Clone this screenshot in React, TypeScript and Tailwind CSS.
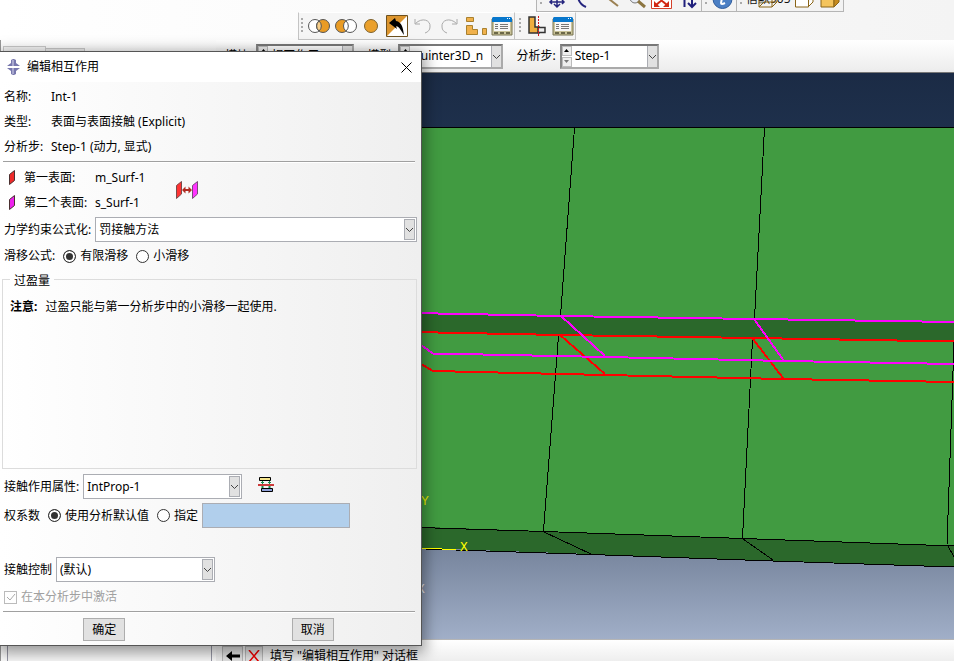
import React from "react";

type ComboProps = {
  id: string;
  label: string;
  value: string;
  width: string;
  labelGap?: string;
};

const Chevron = () => (
  <svg viewBox="0 0 9 21" className="h-[21px] w-[9px]" fill="none" stroke="#444" aria-hidden="true">
    <path d="M1 9 L4.5 12.5 L8 9" />
  </svg>
);

/** Drop-down of the dialog box. */
function Combo({ id, label, value, width, labelGap = "gap-1" }: ComboProps) {
  return (
    <div className={`flex h-[25px] items-center pl-1 ${labelGap}`}>
      <label htmlFor={id} className="shrink-0">{label}</label>
      <div className={`relative h-[25px] border border-[#abadb3] bg-white ${width}`}>
        <select id={id} className="h-full w-full appearance-none bg-transparent pr-4 pl-[3px] outline-none">
          <option>{value}</option>
        </select>
        <span className="pointer-events-none absolute top-px right-px bottom-px flex w-[11px] items-center justify-center border border-[#abadb3] bg-[#e1e1e1]">
          <Chevron />
        </span>
      </div>
    </div>
  );
}

/** Drop-down of the context bar, with its pair of step arrows. */
function SpinCombo({ id, label, value, width }: ComboProps) {
  return (
    <div className="flex items-center gap-1">
      <label htmlFor={id} className="shrink-0">{label}</label>
      <div className={`flex h-[25px] items-stretch border-2 border-[#aaa] border-t-[#777] border-l-[#888] bg-white ${width}`}>
        <div className="flex w-[10px] shrink-0 flex-col gap-px">
          <button type="button" aria-label="上一个" className="flex flex-1 items-center justify-center border border-[#bbb] bg-[#eee]">
            <svg viewBox="0 0 5 3" className="h-[3px] w-[5px]"><path d="M0 3 L2.5 0 L5 3Z" /></svg>
          </button>
          <button type="button" aria-label="下一个" className="flex flex-1 items-center justify-center border border-[#bbb] bg-[#eee]">
            <svg viewBox="0 0 5 3" className="h-[3px] w-[5px]"><path d="M0 0 L2.5 3 L5 0Z" fill="#777" /></svg>
          </button>
        </div>
        <div className="relative min-w-0 flex-1">
          <select id={id} className="h-full w-full appearance-none bg-transparent pr-2 pl-[3px] outline-none">
            <option>{value}</option>
          </select>
          <span className="pointer-events-none absolute top-0 right-0 bottom-0 flex w-[10px] items-center justify-center border-l border-[#abadb3] bg-[#e1e1e1]">
            <Chevron />
          </span>
        </div>
      </div>
    </div>
  );
}

function Radio({ name, label, checked }: { name: string; label: string; checked?: boolean }) {
  return (
    <label className="flex items-center gap-1">
      <input
        type="radio"
        name={name}
        defaultChecked={checked}
        className="size-[13px] appearance-none rounded-full border border-[#333] bg-white checked:bg-[#333] checked:shadow-[inset_0_0_0_2px_white]"
      />
      {label}
    </label>
  );
}

const Rule = () => <hr className="mx-[3px] mr-[6px] h-[2px] border-0 border-t border-[#a0a0a0] bg-white" />;

const Grip = () => (
  <svg viewBox="0 0 3 18" className="h-[18px] w-[3px] shrink-0" fill="#aaa" aria-hidden="true">
    <path d="M0 1h2v2H0zM0 5h2v2H0zM0 9h2v2H0zM0 13h2v2H0z" />
  </svg>
);

const SurfaceIcon = ({ color }: { color: string }) => (
  <svg viewBox="0 0 8 15" className="h-[15px] w-2" aria-hidden="true">
    <path d="M1.5 4.5 L6.5 .5 V10.5 L1.5 14.5Z" fill={color} stroke="#4a3030" />
  </svg>
);

const SwapIcon = () => (
  <svg viewBox="0 0 24 20" className="h-5 w-6" aria-hidden="true">
    <path d="M1.5 5.5 L6.5 1.5 V14 L1.5 18.5Z" fill="#f33" stroke="#7a4a4a" />
    <path d="M17.5 5.5 L22.5 1.5 V14 L17.5 18.5Z" fill="#f3f" stroke="#7a4a7a" />
    <path d="M7 10 L10.5 6.5 V9 H13.5 V6.5 L17 10 L13.5 13.5 V11 H10.5 V13.5Z" fill="#b02a20" />
  </svg>
);

const ManagerIcon = () => (
  <svg viewBox="0 0 22 20" className="h-5 w-[22px]" aria-hidden="true">
    <path d="M1 3h20v16H1z" fill="#c9c39a" stroke="#77724f" />
    <path d="M2 1h18l1 1v4H1V2z" fill="#0877cc" />
    <path d="M16 2h1v1h-1zM18 2h1v1h-1z" fill="#fff" />
    <path d="M3 6h16v9H3z" fill="#f7f7f7" />
    <path d="M4 8.500h3M9 8.500h8M4 10.500h3M9 10.500h8M4 12.500h3M9 12.500h8" stroke="#777" />
    <path d="M3 16h4v2H3zM9 16h4v2H9zM15 16h4v2h-4z" fill="#6c6849" />
  </svg>
);

function Tool({ label, width, children }: { label: string; width: string; children: React.ReactNode }) {
  return (
    <button type="button" aria-label={label} className={`flex h-[26px] shrink-0 items-center justify-center ${width}`}>
      {children}
    </button>
  );
}

/** Upper tool strip; only its lower edge is in view. */
function ViewTools() {
  return (
    <div className="flex h-3 items-end overflow-hidden pl-[536px]">
      <div className="flex h-6 w-[308px] shrink-0 border border-[#b5b5b5] bg-[#f3f3f3]">
        <svg viewBox="536 -12 308 24" className="h-6 w-[308px] shrink-0" fill="none" aria-label="视图工具">
          <path d="M700.500 -12V12M735.500 -12V12" stroke="#b5b5b5" />
          <path d="M539 1h2v2h-2zM704 1h2v2h-2zM739 1h2v2h-2z" fill="#aaa" />
          <path d="M556 -8V6M549 1h14M553 3l3 3 3-3M551 -1l-2 2 2 2M561 -1l2 2-2 2" stroke="#25257e" strokeWidth="1.500" />
          <path d="M577 -4q1 7 8 10" stroke="#25257e" strokeWidth="2" />
          <path d="M608 -2l9 7" stroke="#9b8052" strokeWidth="2" />
          <circle cx="634" cy="-3" r="5" stroke="#777" fill="#e9edf5" />
          <path d="M637 0l7 6" stroke="#8c7540" strokeWidth="3" />
          <path d="M650.500 -11.500h20v19h-20z" fill="#fff" stroke="#d4402a" />
          <path d="M653 6v-6l6 6zM668 6v-6l-6 6z" fill="#d22814" />
          <path d="M655 4l12-10M666 4l-12-10" stroke="#d22814" strokeWidth="2" />
          <path d="M683.500 -8V6M691 -8V6M687 2l4 4 4-4" stroke="#20207c" strokeWidth="2" />
          <circle cx="721.500" cy="-2" r="9.500" fill="#4b7fc4" stroke="#315d9c" />
          <path d="M722 -8l-2 10q0 2 4 0" stroke="#fff" strokeWidth="2" />
          <text x="745" y="2" fontSize="12" fill="#111" fontFamily='"Noto Sans","Noto Sans CJK SC",sans-serif'>信默905</text>
          <path d="M758 -4h13v10h-13zM758 6l5-5h13M771 6l5-5v-9" stroke="#8a6416" />
          <path d="M794.500 -7h13v13h-13zM807 6l5-5v-9" fill="#fff" stroke="#8a6416" />
          <path d="M820 -7h13v13h-13z" fill="#f4c45c" stroke="#8a6416" />
          <path d="M833 6l5-5v-9h-5z" fill="#c58a1e" stroke="#8a6416" />
        </svg>
      </div>
    </div>
  );
}

function SketchTools() {
  return (
    <div className="flex h-7 pl-[298px]">
      <div className="flex w-[217px] shrink-0 items-center border border-[#c4c4c4] border-t-white bg-[#f5f5f5] pl-[2px]">
        <Grip />
        <Tool label="合并" width="w-[29px]">
          <svg viewBox="0 0 22 14" className="h-3.5 w-[22px]" stroke="#555">
            <circle cx="7" cy="7" r="6.500" fill="#fff" />
            <circle cx="15" cy="7" r="6.500" fill="#e99b24" />
            <path d="M11 2a6.500 6.500 0 0 1 0 10a6.500 6.500 0 0 1 0-10" fill="#f8cf89" />
          </svg>
        </Tool>
        <Tool label="减去" width="w-[25px]">
          <svg viewBox="0 0 22 14" className="h-3.5 w-[22px]" stroke="#555">
            <circle cx="7" cy="7" r="6.500" fill="#e99b24" />
            <circle cx="15" cy="7" r="6.500" fill="#fff" />
            <path d="M11 2a6.500 6.500 0 0 1 0 10" fill="none" />
          </svg>
        </Tool>
        <Tool label="替换" width="w-[26px]">
          <svg viewBox="0 0 14 14" className="size-3.5"><circle cx="7" cy="7" r="6.500" fill="#eaa02c" stroke="#7d622f" /></svg>
        </Tool>
        <Tool label="全选" width="w-[26px]">
          <svg viewBox="0 0 22 22" className="size-[22px]">
            <path d="M.5 .5h21v21H.5z" fill="#fff" stroke="#6d5120" />
            <path d="M1 1h20L1 21z" fill="#dc952e" />
            <path d="M3 8l6-5 1 3c6 1 7 7 8 14-3-4-4-8-8-9l1 3z" fill="#000" />
          </svg>
        </Tool>
        <Tool label="撤销" width="w-[26px]">
          <svg viewBox="0 0 18 16" className="h-4 w-[18px]" fill="none" stroke="#aaa">
            <path d="M1 1v5h5M1.500 5.500C8-1 17 2 16 9c0 3-2 5-5 6" />
          </svg>
        </Tool>
        <Tool label="重做" width="w-[26px]">
          <svg viewBox="0 0 18 16" className="h-4 w-[18px]" fill="none" stroke="#aaa">
            <path d="M17 1v5h-5M16.500 5.500C10-1 1 2 2 9c0 3 2 5 5 6" />
          </svg>
        </Tool>
        <Tool label="选择选项" width="w-[27px]">
          <svg viewBox="0 0 22 20" className="h-5 w-[22px]" fill="#f0b14c" stroke="#a9812f">
            <path d="M1.500 1.500h7v4h-7zM1.500 9.500h6v4h5v5h-11zM17.500 12.500h4v6h-4z" />
          </svg>
        </Tool>
        <Tool label="选择管理器" width="w-[26px]"><ManagerIcon /></Tool>
      </div>
      <div className="flex w-[61px] shrink-0 items-center border border-l-0 border-[#c4c4c4] border-t-white bg-[#f5f5f5] pl-1">
        <Grip />
        <Tool label="剖切" width="w-[30px]">
          <svg viewBox="0 0 20 20" className="size-5">
            <path d="M2 1h6v10h4v6H2z" fill="#efad3f" stroke="#333" strokeWidth="1.500" />
            <path d="M11 11.500h7v5h-7z" fill="#eee" stroke="#333" strokeWidth="1.500" />
            <path d="M11.500 0V20" stroke="#d4141c" strokeDasharray="2 1" />
          </svg>
        </Tool>
        <Tool label="剖切管理器" width="w-[22px]"><ManagerIcon /></Tool>
      </div>
    </div>
  );
}

/** Model view: the shaded plate, its mesh edges and the selected surfaces. */
function ModelView() {
  return (
    <svg
      viewBox="216 72 738 567"
      preserveAspectRatio="xMinYMin slice"
      className="h-full w-full"
      fill="none"
      shapeRendering="crispEdges"
      role="img"
      aria-label="模型视图"
    >
      <defs>
        <linearGradient id="sky" x1="0" y1="0" x2="0" y2="1">
          <stop offset="0" stopColor="#1b2b45" />
          <stop offset="0.1" stopColor="#1e304c" />
          <stop offset="0.84" stopColor="#77859d" />
          <stop offset="1" stopColor="#a1afc8" />
        </linearGradient>
      </defs>
      <path d="M216 72H954V639H216z" fill="url(#sky)" />
      <path d="M216 126H954V545L743 537L544 530L216 519z" fill="#419b41" />
      <path d="M216 519L544 530L743 537L954 545V566L773 560L591 553L216 540z" fill="#2b682b" />
      <path d="M216 308L561 315L754 318L954 321V340L753 337L560 334L216 327z" fill="#2b682b" />
      <g stroke="#000">
        <path d="M216 126.500H954M574.500 127L560.500 315M558.500 335L543.500 530M764.500 127L754.500 318M752.500 338L742.500 537M954 341L947 544" />
        <path d="M216 520L544 530.500L743 537.500L954 545M216 541L591 553.500L773 560L954 566" />
        <path d="M544 531L591 553M743 538L773 559M948 545L954 556" />
      </g>
      <g stroke="#f00" strokeWidth="2">
        <path d="M216 327L560 334L753 337L954 340.500M421 363L433 370L605 374L783 378L954 381" />
        <path d="M560 334L605 373M753 338L783 377" />
      </g>
      <g stroke="#f0f" strokeWidth="2">
        <path d="M216 308L561 315L754 318L954 321M421 344L433 352.500L606 356L785 360L954 363" />
        <path d="M561 315L605 355M754 318L784 360" />
      </g>
      <path d="M410 547.500L428 547.500L456 548.500" stroke="#ff0" />
      <g fontFamily='"Liberation Mono",monospace' fontSize="13">
        <text x="421" y="504" fill="#ee0">Y</text>
        <text x="460" y="550" fill="#ff0">X</text>
        <text x="417" y="592" fill="#eee">X</text>
      </g>
    </svg>
  );
}

function InteractionDialog() {
  return (
    <section
      role="dialog"
      aria-labelledby="dialog-title"
      className="absolute top-[51px] left-0 w-[422px] border-t border-r border-b border-[#555] bg-linear-to-r from-white to-[#efefef] pb-1 shadow-[0_4px_14px_3px_rgba(0,0,0,0.4)]"
    >
      <header className="flex h-[30px] items-center gap-[6px] bg-white pr-[7px] pl-[6px]">
        <svg viewBox="0 0 15 16" className="h-4 w-[15px]" aria-hidden="true">
          <path d="M5 1l2-1h1l2 1v3l4 3H1l4-3zM1 9h13l-4 3v3l-2 1H7l-2-1v-3z" fill="#7777ad" />
          <path d="M6 1h2v6H6zM6 9h2v6H6z" fill="#a8a8ce" />
        </svg>
        <h1 id="dialog-title" className="flex-1">编辑相互作用</h1>
        <button type="button" aria-label="关闭" className="flex size-4 items-center justify-center">
          <svg viewBox="0 0 11 11" className="size-[11px]" stroke="#000"><path d="M.5 .5l10 10M10.500 .5l-10 10" /></svg>
        </button>
      </header>

      <dl className="mt-0.5 grid auto-rows-[25px] grid-cols-[47px_1fr] items-center pl-1">
        <dt>名称:</dt><dd>Int-1</dd>
        <dt>类型:</dt><dd>表面与表面接触 (Explicit)</dd>
        <dt>分析步:</dt><dd>Step-1 (动力, 显式)</dd>
      </dl>
      <div className="mt-0.5"><Rule /></div>

      <div className="mt-0.5 flex items-center pl-2">
        <dl className="grid auto-rows-[25px] grid-cols-[87px_80px] items-center">
          <dt className="flex items-center gap-2"><SurfaceIcon color="#ee2a2a" />第一表面:</dt><dd>m_Surf-1</dd>
          <dt className="flex items-center gap-2"><SurfaceIcon color="#ee22ee" />第二个表面:</dt><dd>s_Surf-1</dd>
        </dl>
        <button type="button" aria-label="切换表面"><SwapIcon /></button>
      </div>

      <div className="mt-0.5"><Combo id="formulation" label="力学约束公式化:" value="罚接触方法" width="mr-1 flex-1" /></div>

      <div role="radiogroup" aria-label="滑移公式" className="mt-0.5 flex h-6 items-center gap-2 pl-1">
        <span>滑移公式:</span>
        <Radio name="sliding" label="有限滑移" checked />
        <Radio name="sliding" label="小滑移" />
      </div>

      <fieldset className="mr-1 ml-[2px] h-[201px] border border-[#dcdcdc] px-[7px]">
        <legend className="px-1 pt-1 leading-[18px]">过盈量</legend>
        <p className="mt-2 leading-[18px]"><strong className="mr-2">注意:</strong>过盈只能与第一分析步中的小滑移一起使用.</p>
      </fieldset>

      <div className="mt-[5px] flex items-center gap-4">
        <Combo id="property" label="接触作用属性:" value="IntProp-1" width="w-[159px]" />
        <button type="button" aria-label="创建相互作用属性" className="-mt-1">
          <svg viewBox="0 0 16 16" className="size-4">
            <path d="M1.500 .5h11v3h-11z" fill="#f5e58d" stroke="#000" />
            <path d="M4.500 4v7M11.500 4v7M3 5.500h3M10 5.500h3M3 10h3M10 10h3" stroke="#178a4c" />
            <path d="M0 7h16v2H0z" fill="#cc3b3b" />
            <path d="M3.500 11.500h11v3h-11z" fill="#8fa0d8" stroke="#000" />
          </svg>
        </button>
      </div>

      <div role="radiogroup" aria-label="权系数" className="mt-1 flex h-[25px] items-center gap-2 pl-1">
        <span>权系数</span>
        <Radio name="weight" label="使用分析默认值" checked />
        <div className="flex items-center gap-1">
          <Radio name="weight" label="指定" />
          <input aria-label="权系数值" disabled className="h-[25px] w-[148px] border border-[#abadb3] bg-[#b1cfec]" />
        </div>
      </div>

      <div className="mt-[29px]"><Combo id="controls" label="接触控制" value="(默认)" width="w-[159px]" /></div>

      <label className="mt-[5px] flex h-5 items-center gap-1 pl-1 text-[#a0a0a0]">
        <span className="relative size-[13px]">
          <input type="checkbox" defaultChecked disabled className="block size-[13px] appearance-none border border-[#bbb]" />
          <svg viewBox="0 0 13 13" className="pointer-events-none absolute inset-0 size-[13px]" fill="none" stroke="#aaa"><path d="M3 6l3 3 5-6" /></svg>
        </span>
        在本分析步中激活
      </label>
      <div className="mt-1"><Rule /></div>
      <div className="mt-[5px] grid grid-cols-2 justify-items-center pr-1">
        <button type="button" className="h-[23px] w-[42px] border border-[#adadad] bg-[#e1e1e1]">确定</button>
        <button type="button" className="h-[23px] w-[42px] border border-[#adadad] bg-[#e1e1e1]">取消</button>
      </div>
    </section>
  );
}

export default function App() {
  return (
    <div className='relative flex h-screen flex-col overflow-hidden bg-linear-to-r from-white to-[#f4f4f4] font-["Noto_Sans","Noto_Sans_CJK_SC",sans-serif] text-[12px] leading-4 text-black'>
      <ViewTools />
      <SketchTools />
      <div className="flex min-h-0 flex-1">
        <aside className="flex w-[216px] shrink-0 flex-col border-l border-[#999] pt-1.5 pr-1 pl-[2px]">
          <div className="flex items-end">
            <span className="h-[18px] w-[43px] border border-b-0 border-[#ccc] bg-[#f8f8f8]" />
            <span className="h-4 w-[39px] border border-b-0 border-l-0 border-[#ccc] bg-[#eee]" />
          </div>
          <div className="ml-1 flex-1 border-x border-[#999aa8] bg-[#fbfbfb]" />
        </aside>
        <main className="flex min-w-0 flex-1 flex-col">
          <div className="flex h-[33px] shrink-0 items-center gap-[13px] border-b border-[#777] bg-linear-to-b from-white to-[#ececec] pl-[9px]">
            <SpinCombo id="module" label="模块:" value="相互作用" width="w-[98px]" />
            <SpinCombo id="model" label="模型:" value="quinter3D_n" width="w-[105px]" />
            <SpinCombo id="step" label="分析步:" value="Step-1" width="w-[99px]" />
          </div>
          <div className="min-h-0 flex-1 overflow-hidden"><ModelView /></div>
          <footer className="flex h-[22px] shrink-0 items-start gap-[2px] overflow-hidden border-t border-[#b5b5b5] bg-linear-to-b from-white to-[#eeeeee] pt-1.5 pl-[6px]">
            <button type="button" aria-label="返回" className="flex h-5 w-[21px] items-center justify-center border border-[#bbb] bg-[#e6e6e6]">
              <svg viewBox="0 0 14 12" className="h-3 w-3.5"><path d="M0 6l6-5v3.500h8v3H6V11z" /></svg>
            </button>
            <button type="button" aria-label="取消步骤" className="flex h-5 w-[18px] items-center justify-center border border-[#bbb] bg-[#e6e6e6]">
              <svg viewBox="0 0 12 12" className="size-3" stroke="#f00000" strokeWidth="1.500"><path d="M1 0l10 12M11 0L1 12" /></svg>
            </button>
            <p className="pt-0.5 pl-[5px]">填写 "编辑相互作用" 对话框</p>
          </footer>
        </main>
      </div>
      <InteractionDialog />
    </div>
  );
}
